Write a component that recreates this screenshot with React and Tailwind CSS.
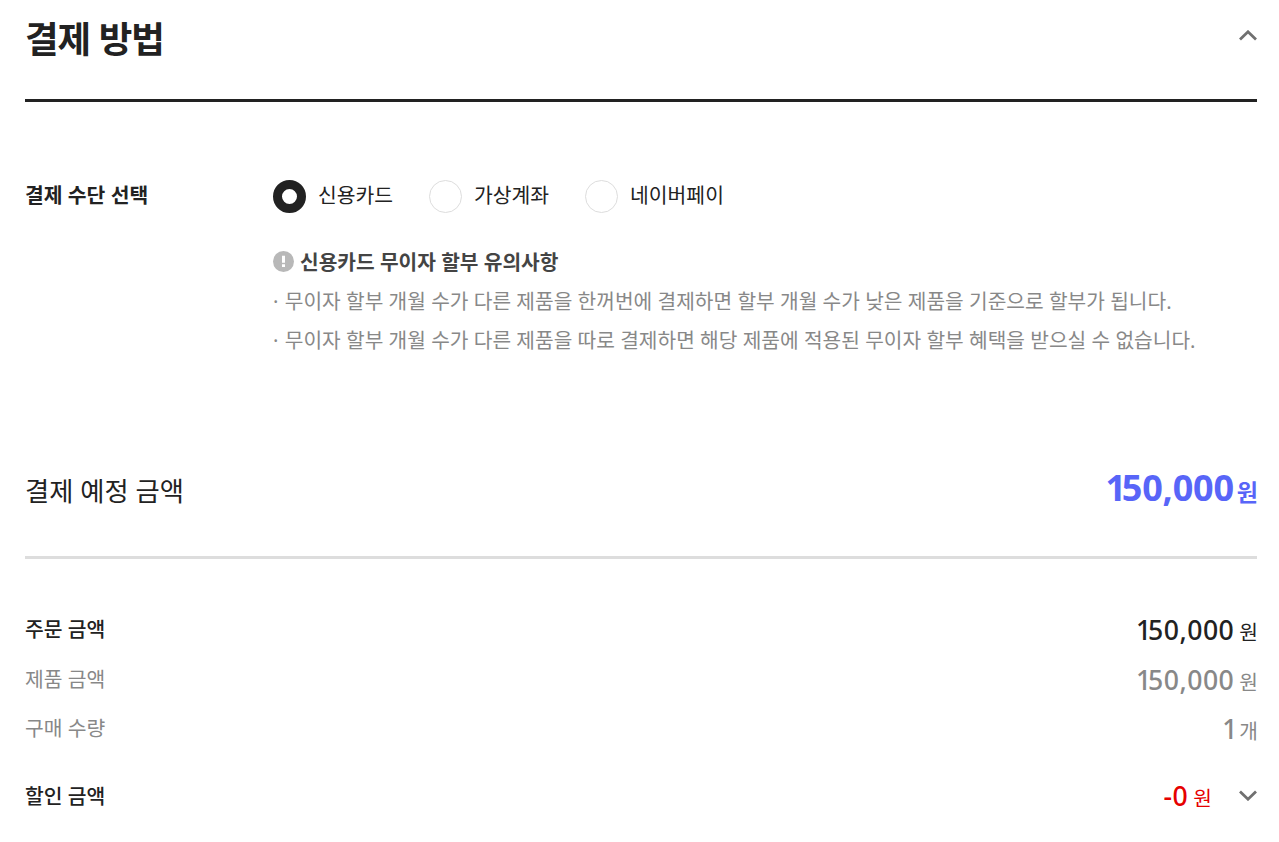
import React, { useState } from "react";

const methods = ["신용카드", "가상계좌", "네이버페이"];

const notices = [
  "무이자 할부 개월 수가 다른 제품을 한꺼번에 결제하면 할부 개월 수가 낮은 제품을 기준으로 할부가 됩니다.",
  "무이자 할부 개월 수가 다른 제품을 따로 결제하면 해당 제품에 적용된 무이자 할부 혜택을 받으실 수 없습니다.",
];

const Chevron = ({ className, d }) => (
  <svg width="18" height="11" viewBox="0 0 18 11" fill="none" className={className}>
    <path d={d} stroke="#707070" strokeWidth="2.8" />
  </svg>
);

// Tightens the gap after a leading 1
const Digits = ({ value }) =>
  value.startsWith("1") ? (
    <>
      <span className="tracking-[-0.12em]">1</span>
      {value.slice(1)}
    </>
  ) : (
    value
  );

const Amount = ({ value, unit }) => (
  <span className="flex items-baseline gap-[5px] -mr-px">
    <span className="text-[26.6px] font-medium leading-none tracking-[0.5px]">
      <Digits value={value} />
    </span>
    <span className="text-[20.3px] font-normal leading-none">{unit}</span>
  </span>
);

const App = () => {
  const [selected, setSelected] = useState(0);

  return (
    <div className="w-[1279px] h-[842px] overflow-hidden bg-white pl-[25px] pr-[22px] text-[#222] font-['Noto_Sans','Noto_Sans_CJK_KR',sans-serif]">
      <header className="flex justify-between h-[102px] border-b-3 border-[#222]">
        <h2 className="mt-[12px] text-[36.5px] leading-[54px] font-bold tracking-[-1px]">결제 방법</h2>
        <Chevron className="mt-[30px]" d="M1 9.5 9 1.8l8 7.7" />
      </header>

      <section className="flex h-[354px] pt-[78px]">
        <h3 className="w-[248px] shrink-0 text-[20.4px] leading-[30px] font-bold">결제 수단 선택</h3>
        <div>
          <div className="flex gap-[36px]">
            {methods.map((name, index) => (
              <button key={name} onClick={() => setSelected(index)} className="flex h-[33px] gap-[12px]">
                <span
                  className={`size-[33px] rounded-full ${
                    selected === index ? "border-9 border-[#222]" : "border border-[#ddd]"
                  }`}
                ></span>
                <span className="text-[20.4px] leading-[30px]">{name}</span>
              </button>
            ))}
          </div>

          <div className="flex items-center mt-[29px] gap-[6px]">
            <svg width="21" height="21" viewBox="0 0 21 21">
              <circle cx="10.5" cy="10.5" r="10.5" fill="#b8b8b8" />
              <path d="M10.5 4.8v7M10.5 13.3v2.7" stroke="#fff" strokeWidth="3" />
            </svg>
            <strong className="pt-px text-[20.3px] leading-[38px] font-bold text-[#444]">
              신용카드 무이자 할부 유의사항
            </strong>
          </div>
          <ul className="mt-px text-[20.3px] leading-[39px] text-[#888] whitespace-nowrap">
            {notices.map((text) => (
              <li key={text}>
                <span className="mr-px">·</span> {text}
              </li>
            ))}
          </ul>
        </div>
      </section>

      <div className="flex justify-between h-[103px] border-b-3 border-[#ddd]">
        <h3 className="mt-[15px] text-[26.3px] leading-[40px]">결제 예정 금액</h3>
        <p className="flex items-baseline mt-[12px] -mr-px gap-[3px] h-[40px] font-bold text-[#5865f8]">
          <span className="text-[36px] leading-[40px] tracking-[-0.2px]">
            <Digits value="150,000" />
          </span>
          <span className="text-[23px] leading-[40px]">원</span>
        </p>
      </div>

      <dl className="pt-[45px] text-[20.4px]">
        <div className="flex items-center justify-between h-[50px]">
          <dt className="font-medium">주문 금액</dt>
          <dd className="pt-[2px]"><Amount value="150,000" unit="원" /></dd>
        </div>
        <div className="flex items-center justify-between h-[49px] pt-px text-[#888]">
          <dt>제품 금액</dt>
          <dd className="pt-[2px]"><Amount value="150,000" unit="원" /></dd>
        </div>
        <div className="flex items-center justify-between h-[50px] text-[#888]">
          <dt>구매 수량</dt>
          <dd className="pt-[2px]"><Amount value="1" unit="개" /></dd>
        </div>
        <div className="flex items-center justify-between h-[50px] mt-[18px]">
          <dt className="font-medium">할인 금액</dt>
          <dd className="flex items-center gap-[28px] text-[#e60000]">
            <Amount value="-0" unit="원" />
            <Chevron className="-mt-[2px]" d="M1 1.5 9 9.2l8-7.7" />
          </dd>
        </div>
      </dl>
    </div>
  );
};

export default App;
